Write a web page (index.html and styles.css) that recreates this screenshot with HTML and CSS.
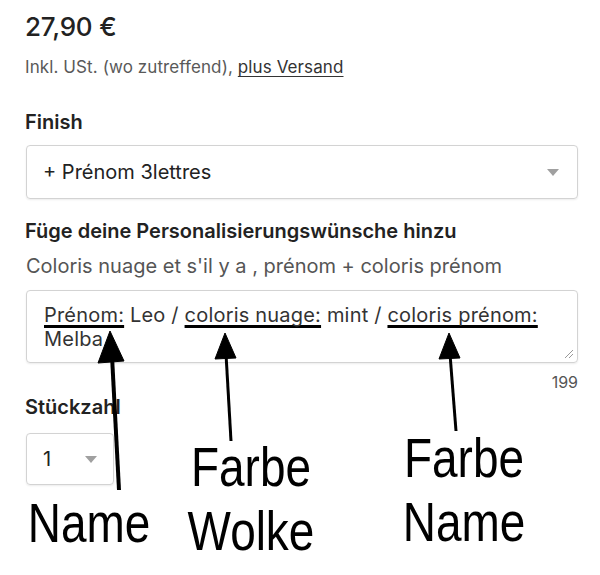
FILE: index.html
```html
<!DOCTYPE html>
<html lang="de">
	<head>
		<meta charset="utf-8" />
		<title>Personalisierung</title>
		<meta name="viewport" content="width=device-width, initial-scale=1.0">
		<link rel="stylesheet" href="styles.css">
	</head>
	<body>
		<div id="sheet">
			<div class="price">27,90 €</div>
			<div class="tax">Inkl. USt. (wo zutreffend), <a href="#">plus Versand</a></div>

			<div class="label label-finish">Finish</div>
			<div class="select">
				<span>+ Prénom 3lettres</span>
				<span class="caret"></span>
			</div>

			<div class="label label-perso">Füge deine Personalisierungswünsche hinzu</div>
			<div class="hint">Coloris nuage et s'il y a , prénom + coloris prénom</div>
			<div class="textarea">
				<span class="mark">Prénom:</span> Leo / <span class="mark">coloris nuage:</span> mint / <span class="mark">coloris prénom:</span> Melba
				<svg class="grip" width="10" height="10" viewBox="0 0 10 10">
					<line x1="9" y1="1" x2="1" y2="9" />
					<line x1="9" y1="5" x2="5" y2="9" />
				</svg>
			</div>
			<div class="count">199</div>

			<div class="label label-qty">Stückzahl</div>
			<div class="select select-small">
				<span>1</span>
				<span class="caret"></span>
			</div>

			<!-- annotations drawn over the form -->
			<svg class="arrows" width="600" height="575" viewBox="0 0 600 575">
				<line x1="119" y1="490" x2="112" y2="356" stroke-width="4" />
				<polygon points="110,331 98,363 124,361" />
				<line x1="231" y1="441" x2="226" y2="354" stroke-width="3" />
				<polygon points="225,333 215,359 236,358" />
				<line x1="456" y1="431" x2="450" y2="354" stroke-width="3" />
				<polygon points="449,333 439,359 460,358" />
			</svg>
			<div class="note note-name">Name</div>
			<div class="note note-wolke">Farbe<br>Wolke</div>
			<div class="note note-farbe">Farbe<br>Name</div>
		</div>
	</body>
</html>
```

FILE: styles.css
```css
body, html {
	margin:0;
	padding:0;
	background:#fff;
	font-family:Inter, "Liberation Sans", sans-serif;
	color:#222;
}
#sheet {
	position:relative;
	width:552px;
	height:575px;
	padding:11px 22px 0 26px;
	box-sizing:content-box;
	overflow:hidden;
}
.price {
	font-size:26px;
	font-weight:500;
	line-height:32px;
	letter-spacing:-0.2px;
	margin-left:-1px;
}
.tax {
	margin-top:13px;
	font-size:17px;
	line-height:22px;
	color:#595959;
	margin-left:-1px;
	letter-spacing:0.1px;
}
.tax a {
	color:#333;
	text-decoration:underline;
	text-underline-offset:3px;
}
.label {
	font-size:20px;
	font-weight:600;
	line-height:24px;
	margin-left:-1px;
}
.label-finish {
	margin-top:32px;
}
.label-perso {
	margin-top:20px;
}
.label-qty {
	margin-top:3px;
}
.select {
	display:flex;
	align-items:center;
	justify-content:space-between;
	box-sizing:border-box;
	height:54px;
	margin-top:11px;
	padding:0 18px 0 16px;
	border:1px solid #d3d3d3;
	border-radius:4px;
	box-shadow:0 1px 2px rgba(0,0,0,0.08);
	font-size:20px;
	color:#222;
}
.caret {
	width:0;
	height:0;
	border-left:6px solid transparent;
	border-right:6px solid transparent;
	border-top:7px solid #a0a0a0;
}
.select-small {
	width:88px;
	height:52px;
	margin-top:14px;
	padding-right:16px;
}
.hint {
	margin-top:10px;
	font-size:20px;
	line-height:26px;
	color:#555;
}
.textarea {
	position:relative;
	box-sizing:border-box;
	height:73px;
	margin-top:11px;
	padding:12px 17px;
	border:1px solid #d3d3d3;
	border-radius:4px;
	box-shadow:0 1px 2px rgba(0,0,0,0.08);
	font-size:20px;
	line-height:24px;
	letter-spacing:0.2px;
	color:#333;
}
.mark {
	text-decoration:underline;
	text-decoration-color:#000;
	text-decoration-thickness:3px;
	text-decoration-skip-ink:none;
	text-underline-offset:3px;
}
.grip {
	position:absolute;
	right:3px;
	bottom:3px;
	stroke:#999;
	stroke-width:1;
}
.count {
	margin-top:9px;
	text-align:right;
	font-size:16px;
	line-height:20px;
	color:#555;
}
.arrows {
	position:absolute;
	left:0;
	top:0;
	stroke:#000;
	fill:#000;
}
.note {
	position:absolute;
	width:160px;
	font-family:"Liberation Sans", Arial, sans-serif;
	font-size:56px;
	line-height:64px;
	text-align:center;
	color:#000;
	transform:scaleX(0.82);
}
.note-name {
	left:9px;
	top:491px;
}
.note-wolke {
	left:171px;
	top:435px;
}
.note-farbe {
	left:384px;
	top:426px;
}
```
